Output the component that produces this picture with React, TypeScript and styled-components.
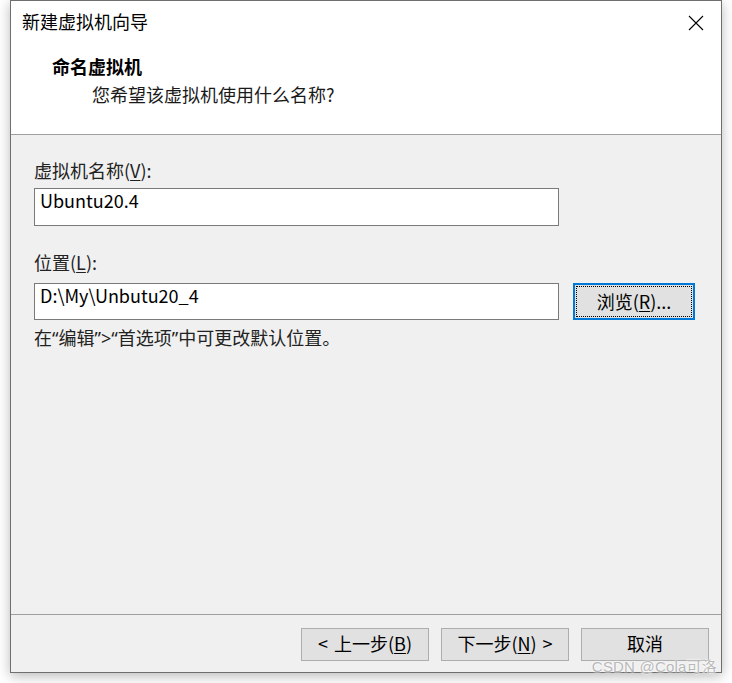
import styled, { createGlobalStyle } from "styled-components";

const GlobalStyle = createGlobalStyle`
  html, body {
    margin: 0;
    padding: 0;
    background: #ffffff;
  }
  body {
    font-family: "Noto Sans CJK SC", "Noto Sans", sans-serif;
    font-size: 18px;
    color: #000;
  }
`;

const Page = styled.div`
  width: 732px;
  height: 683px;
  padding-left: 10px;
  box-sizing: border-box;
  overflow: hidden;
`;

const Dialog = styled.div`
  position: relative;
  width: 712px;
  height: 673px;
  box-sizing: border-box;
  border: 1px solid #6f6f6f;
  background: #f0f0f0;
  display: flex;
  flex-direction: column;
  box-shadow: 0 3px 12px rgba(0, 0, 0, 0.28);
`;

const Header = styled.div`
  height: 133px;
  background: #ffffff;
  border-bottom: 1px solid #a0a0a0;
  display: flex;
  flex-direction: column;
`;

const TitleBar = styled.div`
  height: 44px;
  display: flex;
  align-items: center;
  justify-content: space-between;
  padding-left: 11px;
  padding-right: 17px;
`;

const WindowTitle = styled.span`
  line-height: 20px;
  margin-top: -4px;
`;

const CloseButton = styled.div`
  width: 16px;
  height: 16px;
  display: flex;
  align-items: center;
  justify-content: center;
`;

const PageTitle = styled.div`
  margin-left: 41px;
  margin-top: 11px;
  font-weight: 700;
  line-height: 20px;
`;

const PageSubtitle = styled.div`
  margin-left: 81px;
  margin-top: 8px;
  line-height: 20px;
  color: #1a1a1a;
`;

const Content = styled.div`
  flex: 1;
  display: flex;
  flex-direction: column;
  padding: 25px 0 0 23px;
`;

const FieldLabel = styled.div<{ $gap: number }>`
  line-height: 20px;
  color: #222;
  margin-bottom: ${(p) => p.$gap}px;
`;

const Key = styled.span`
  text-decoration: underline;
  text-underline-offset: 2px;
`;

const Row = styled.div`
  display: flex;
  align-items: flex-start;
  gap: 14px;
`;

const TextBox = styled.input<{ $h: number }>`
  width: 525px;
  height: ${(p) => p.$h}px;
  box-sizing: border-box;
  border: 1px solid #7a7a7a;
  background: #fff;
  margin: 0;
  padding: 2px 5px 0;
  padding-bottom: ${(p) => p.$h - 22}px;
  font-family: "Noto Sans CJK SC", "Noto Sans", sans-serif;
  font-size: 18px;
  line-height: 18px;
  color: #000;
  outline: none;
`;

const Spacer = styled.div<{ $h: number }>`
  height: ${(p) => p.$h}px;
`;

const Hint = styled.div`
  margin-top: 8px;
  line-height: 20px;
  color: #222;
  font-family: "Noto Sans", "Noto Sans CJK SC", sans-serif;
`;

const BrowseButton = styled.div`
  width: 122px;
  height: 37px;
  box-sizing: border-box;
  border: 2px solid #0078d7;
  background: #e1e1e1;
  padding: 1px;
  display: flex;
`;

const FocusRect = styled.div`
  flex: 1;
  border: 1px dotted #000;
  display: flex;
  align-items: center;
  justify-content: center;
  line-height: 20px;
  padding-bottom: 2px;
`;

const Footer = styled.div`
  border-top: 1px solid #a0a0a0;
  height: 58px;
  box-sizing: border-box;
  display: flex;
  justify-content: flex-end;
  align-items: flex-start;
  gap: 12px;
  padding: 13px 12px 0 0;
`;

const NavButton = styled.div`
  width: 128px;
  height: 33px;
  box-sizing: border-box;
  border: 1px solid #adadad;
  background: #e1e1e1;
  display: flex;
  align-items: center;
  justify-content: center;
  line-height: 20px;
  padding-bottom: 4px;
  gap: 6px;
`;

const Watermark = styled.div`
  position: absolute;
  right: 4px;
  bottom: -4px;
  font-family: "Liberation Sans", "Noto Sans CJK SC", sans-serif;
  font-size: 15px;
  color: #b8b8b8;
  text-shadow: 0 0 2px #fff, 0 0 2px #fff;
  letter-spacing: 0.2px;
`;

function CloseIcon() {
  return (
    <svg width="16" height="16" viewBox="0 0 16 16">
      <path d="M1 1 L15 15 M15 1 L1 15" stroke="#000" strokeWidth="1.1" fill="none" />
    </svg>
  );
}

export default function App() {
  return (
    <>
      <GlobalStyle />
      <Page>
        <Dialog>
          <Header>
            <TitleBar>
              <WindowTitle>新建虚拟机向导</WindowTitle>
              <CloseButton>
                <CloseIcon />
              </CloseButton>
            </TitleBar>
            <PageTitle>命名虚拟机</PageTitle>
            <PageSubtitle>您希望该虚拟机使用什么名称?</PageSubtitle>
          </Header>
          <Content>
            <FieldLabel $gap={8}>
              虚拟机名称(<Key>V</Key>):
            </FieldLabel>
            <TextBox $h={38} defaultValue="Ubuntu20.4" readOnly />
            <Spacer $h={26} />
            <FieldLabel $gap={11}>
              位置(<Key>L</Key>):
            </FieldLabel>
            <Row>
              <TextBox $h={37} defaultValue="D:\My\Unbutu20_4" readOnly />
              <BrowseButton>
                <FocusRect>
                  浏览(<Key>R</Key>)...
                </FocusRect>
              </BrowseButton>
            </Row>
            <Hint>在“编辑”&gt;“首选项”中可更改默认位置。</Hint>
          </Content>
          <Footer>
            <NavButton>
              <span>&lt;</span>
              <span>
                上一步(<Key>B</Key>)
              </span>
            </NavButton>
            <NavButton>
              <span>
                下一步(<Key>N</Key>)
              </span>
              <span>&gt;</span>
            </NavButton>
            <NavButton>取消</NavButton>
          </Footer>
          <Watermark>CSDN @Cola可洛</Watermark>
        </Dialog>
      </Page>
    </>
  );
}
